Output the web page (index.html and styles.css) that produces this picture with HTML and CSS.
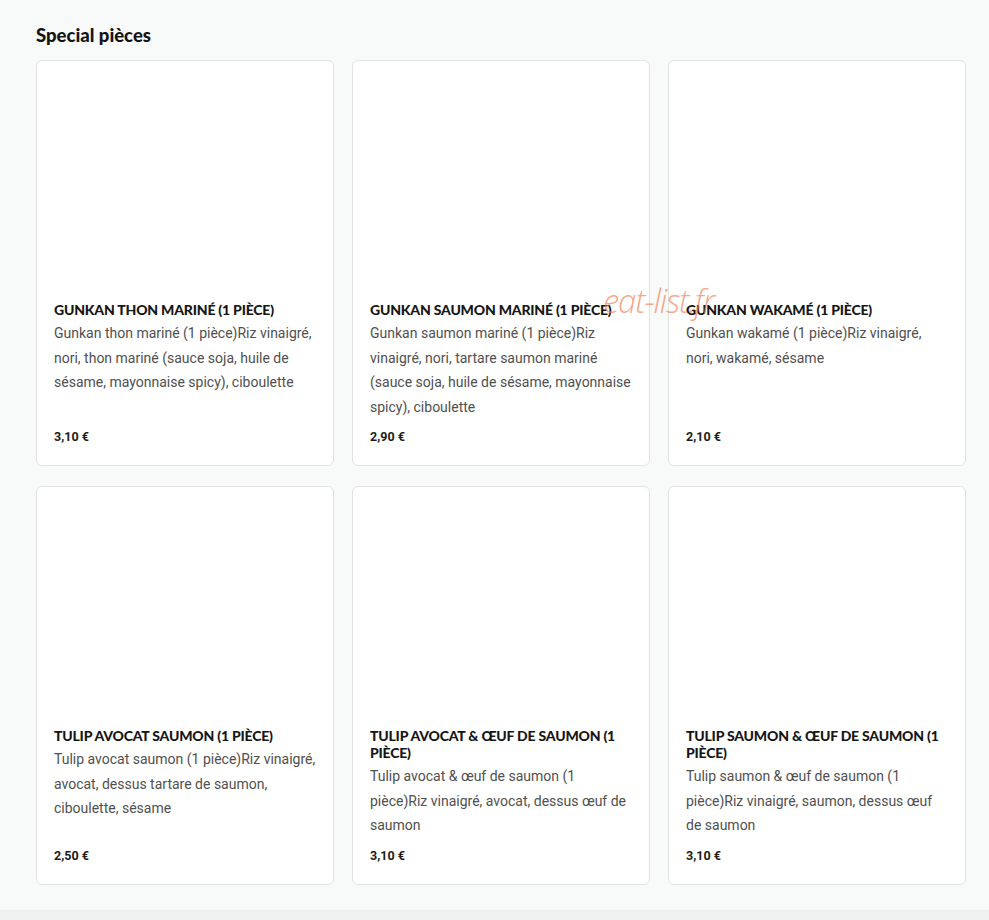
FILE: index.html
```html
<!DOCTYPE html>
<html lang="fr">
<head>
    <meta charset="UTF-8">
    <meta name="viewport" content="width=device-width, initial-scale=1.0">
    <title>Special pièces</title>
    <link rel="stylesheet" href="styles.css">
</head>
<body>
    <div class="menu">
        <h2 class="section-title">Special pièces</h2>

        <div class="grid">
            <div class="card">
                <div class="photo"></div>
                <h3 class="dish">GUNKAN THON MARINÉ (1 PIÈCE)</h3>
                <p class="desc">Gunkan thon mariné (1 pièce)Riz vinaigré, nori, thon mariné (sauce soja, huile de sésame, mayonnaise spicy), ciboulette</p>
                <div class="price">3,10 €</div>
            </div>
            <div class="card">
                <div class="photo"></div>
                <h3 class="dish">GUNKAN SAUMON MARINÉ (1 PIÈCE)</h3>
                <p class="desc">Gunkan saumon mariné (1 pièce)Riz vinaigré, nori, tartare saumon mariné (sauce soja, huile de sésame, mayonnaise spicy), ciboulette</p>
                <div class="price">2,90 €</div>
                <span class="stamp">eat-list.fr</span>
            </div>
            <div class="card">
                <div class="photo"></div>
                <h3 class="dish">GUNKAN WAKAMÉ (1 PIÈCE)</h3>
                <p class="desc">Gunkan wakamé (1 pièce)Riz vinaigré, nori, wakamé, sésame</p>
                <div class="price">2,10 €</div>
            </div>

            <div class="card">
                <div class="photo"></div>
                <h3 class="dish">TULIP AVOCAT SAUMON (1 PIÈCE)</h3>
                <p class="desc">Tulip avocat saumon (1 pièce)Riz vinaigré, avocat, dessus tartare de saumon, ciboulette, sésame</p>
                <div class="price">2,50 €</div>
            </div>
            <div class="card">
                <div class="photo"></div>
                <h3 class="dish">TULIP AVOCAT &amp; ŒUF DE SAUMON (1 PIÈCE)</h3>
                <p class="desc">Tulip avocat &amp; œuf de saumon (1 pièce)Riz vinaigré, avocat, dessus œuf de saumon</p>
                <div class="price">3,10 €</div>
            </div>
            <div class="card">
                <div class="photo"></div>
                <h3 class="dish">TULIP SAUMON &amp; ŒUF DE SAUMON (1 PIÈCE)</h3>
                <p class="desc">Tulip saumon &amp; œuf de saumon (1 pièce)Riz vinaigré, saumon, dessus œuf de saumon</p>
                <div class="price">3,10 €</div>
            </div>
        </div>
    </div>
    <div class="footer"></div>
</body>
</html>
```

FILE: styles.css
```css
body{
    margin: 0;
    background-color: #f8f9f9;
    font-family: Roboto, "Liberation Sans", sans-serif;
}
.menu{
    padding: 24px 23px 25px 36px;
}
.section-title{
    margin: 0 0 14px 0;
    font-family: Lato, "Liberation Sans", sans-serif;
    font-size: 18.5px;
    line-height: 22px;
    font-weight: 900;
    color: #141414;
}
.grid{
    display: grid;
    grid-template-columns: repeat(3, 298px);
    column-gap: 18px;
    row-gap: 20px;
}
.card{
    position: relative;
    display: flex;
    flex-direction: column;
    padding: 0 16px 20px 17px;
    background-color: #fff;
    border: 1px solid #e2e2e2;
    border-radius: 6px;
}
.photo{
    height: 240px;
}
.dish{
    margin: 0 0 3px 0;
    font-family: Lato, "Liberation Sans", sans-serif;
    font-size: 14px;
    line-height: 17px;
    font-weight: 900;
    color: #161616;
    letter-spacing: -0.2px;
}
.desc{
    margin: 0;
    font-size: 14px;
    line-height: 24.5px;
    color: #505050;
}
.price{
    margin-top: auto;
    padding-top: 10px;
    font-size: 12.5px;
    line-height: 16px;
    font-weight: 700;
    color: #1c1c1c;
}
/* site watermark over the card photo */
.stamp{
    position: absolute;
    z-index: 2;
    left: 250px;
    top: 223px;
    font-family: "Open Sans", sans-serif;
    font-size: 33px;
    line-height: 33px;
    font-style: italic;
    font-weight: 300;
    letter-spacing: -1.2px;
    color: rgba(240, 130, 90, 0.7);
    white-space: nowrap;
}
.footer{
    height: 10px;
    background-color: #eff0f0;
}
```
